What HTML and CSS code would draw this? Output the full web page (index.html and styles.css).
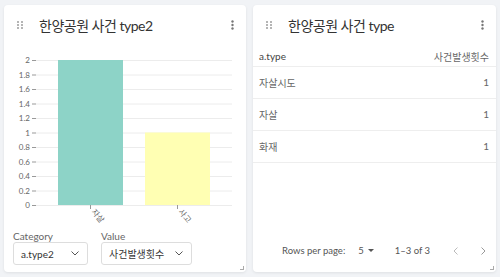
FILE: index.html
```html
<html>
    <head>
        <title>한양공원 사건</title>
        <link rel="stylesheet" href="styles.css">
    </head>
    <body>
        <div class="board">
            <div class="card">
                <div class="card-head">
                    <svg class="handle" width="6" height="8" viewBox="0 0 6 8"><g fill="#b5b5b5"><rect x="0" y="0" width="2" height="2"/><rect x="4" y="0" width="2" height="2"/><rect x="0" y="3" width="2" height="2"/><rect x="4" y="3" width="2" height="2"/><rect x="0" y="6" width="2" height="2"/><rect x="4" y="6" width="2" height="2"/></g></svg>
                    <h2 class="title">한양공원 사건 type2</h2>
                    <svg class="menu" width="3" height="10" viewBox="0 0 3 10"><g fill="#777"><circle cx="1.5" cy="1.5" r="1.2"/><circle cx="1.5" cy="5" r="1.2"/><circle cx="1.5" cy="8.5" r="1.2"/></g></svg>
                </div>
                <svg class="chart" width="242" height="182" viewBox="0 0 242 182">
                    <g stroke="#ececec" stroke-width="1">
                        <line x1="32" y1="15.5" x2="228" y2="15.5"/>
                        <line x1="32" y1="30" x2="228" y2="30"/>
                        <line x1="32" y1="44.5" x2="228" y2="44.5"/>
                        <line x1="32" y1="59" x2="228" y2="59"/>
                        <line x1="32" y1="73.5" x2="228" y2="73.5"/>
                        <line x1="32" y1="88" x2="228" y2="88"/>
                        <line x1="32" y1="102.5" x2="228" y2="102.5"/>
                        <line x1="32" y1="117" x2="228" y2="117"/>
                        <line x1="32" y1="131.5" x2="228" y2="131.5"/>
                        <line x1="32" y1="146" x2="228" y2="146"/>
                        <line x1="32" y1="160.5" x2="228" y2="160.5"/>
                    </g>
                    <g stroke="#999" stroke-width="1">
                        <line x1="28" y1="15.5" x2="32" y2="15.5"/>
                        <line x1="28" y1="30" x2="32" y2="30"/>
                        <line x1="28" y1="44.5" x2="32" y2="44.5"/>
                        <line x1="28" y1="59" x2="32" y2="59"/>
                        <line x1="28" y1="73.5" x2="32" y2="73.5"/>
                        <line x1="28" y1="88" x2="32" y2="88"/>
                        <line x1="28" y1="102.5" x2="32" y2="102.5"/>
                        <line x1="28" y1="117" x2="32" y2="117"/>
                        <line x1="28" y1="131.5" x2="32" y2="131.5"/>
                        <line x1="28" y1="146" x2="32" y2="146"/>
                        <line x1="28" y1="160.5" x2="32" y2="160.5"/>
                        <line x1="86.5" y1="160" x2="86.5" y2="164"/>
                        <line x1="173.5" y1="160" x2="173.5" y2="164"/>
                    </g>
                    <g class="axis-text" text-anchor="end">
                        <text x="26" y="18">2</text>
                        <text x="26" y="32.5">1.8</text>
                        <text x="26" y="47">1.6</text>
                        <text x="26" y="61.5">1.4</text>
                        <text x="26" y="76">1.2</text>
                        <text x="26" y="90.5">1</text>
                        <text x="26" y="105">0.8</text>
                        <text x="26" y="119.5">0.6</text>
                        <text x="26" y="134">0.4</text>
                        <text x="26" y="148.5">0.2</text>
                        <text x="26" y="163">0</text>
                    </g>
                    <rect x="54" y="15" width="65" height="145" fill="#8dd3c7"/>
                    <rect x="141" y="87.5" width="65" height="72.5" fill="#ffffb3"/>
                    <g class="axis-text">
                        <text transform="translate(87 167) rotate(50)">자살</text>
                        <text transform="translate(174 167) rotate(50)">사고</text>
                    </g>
                </svg>
                <div class="fields">
                    <div class="field">
                        <label>Category</label>
                        <div class="select select-cat">a.type2<svg class="chev" width="8" height="5" viewBox="0 0 8 5"><path d="M0.5 0.5 L4 4 L7.5 0.5" fill="none" stroke="#555" stroke-width="1"/></svg></div>
                    </div>
                    <div class="field">
                        <label>Value</label>
                        <div class="select select-val">사건발생횟수<svg class="chev" width="8" height="5" viewBox="0 0 8 5"><path d="M0.5 0.5 L4 4 L7.5 0.5" fill="none" stroke="#555" stroke-width="1"/></svg></div>
                    </div>
                </div>
                <span class="resize"></span>
            </div>

            <div class="card">
                <div class="card-head">
                    <svg class="handle" width="6" height="8" viewBox="0 0 6 8"><g fill="#b5b5b5"><rect x="0" y="0" width="2" height="2"/><rect x="4" y="0" width="2" height="2"/><rect x="0" y="3" width="2" height="2"/><rect x="4" y="3" width="2" height="2"/><rect x="0" y="6" width="2" height="2"/><rect x="4" y="6" width="2" height="2"/></g></svg>
                    <h2 class="title">한양공원 사건 type</h2>
                    <svg class="menu" width="3" height="10" viewBox="0 0 3 10"><g fill="#777"><circle cx="1.5" cy="1.5" r="1.2"/><circle cx="1.5" cy="5" r="1.2"/><circle cx="1.5" cy="8.5" r="1.2"/></g></svg>
                </div>
                <table class="data">
                    <thead>
                        <tr><th>a.type</th><th class="num">사건발생횟수</th></tr>
                    </thead>
                    <tbody>
                        <tr><td>자살시도</td><td class="num">1</td></tr>
                        <tr><td>자살</td><td class="num">1</td></tr>
                        <tr><td>화재</td><td class="num">1</td></tr>
                    </tbody>
                </table>
                <div class="pager">
                    <span class="rows-label">Rows per page:</span>
                    <span class="rows-count">5 <span class="caret"></span></span>
                    <span class="range">1–3 of 3</span>
                    <svg class="nav" width="5" height="8" viewBox="0 0 5 8"><path d="M4.5 0.5 L1 4 L4.5 7.5" fill="none" stroke="#bbb" stroke-width="1"/></svg>
                    <svg class="nav" width="5" height="8" viewBox="0 0 5 8"><path d="M0.5 0.5 L4 4 L0.5 7.5" fill="none" stroke="#999" stroke-width="1"/></svg>
                </div>
                <span class="resize"></span>
            </div>
        </div>
    </body>
</html>
```
FILE: styles.css
```css
body {
    margin: 0;
    background-color: #f1f3f6;
    font-family: "Lato", "Noto Sans CJK KR", sans-serif;
    color: #333;
}

.board {
    display: grid;
    grid-template-columns: 242px 243px;
    gap: 7px;
    padding: 5px 4px;
}

.card {
    position: relative;
    height: 267px;
    background-color: #fff;
    border-radius: 4px;
    box-shadow: 0 1px 3px rgba(0, 0, 0, 0.08);
    display: flex;
    flex-direction: column;
}

.card-head {
    display: flex;
    align-items: center;
    height: 40px;
    padding: 0 12px 0 13px;
}

.handle {
    flex: none;
}

.title {
    flex: 1;
    margin: 0 0 0 16px;
    font-size: 14px;
    letter-spacing: -0.5px;
    font-weight: normal;
    color: #333;
    white-space: nowrap;
}

.menu {
    flex: none;
}

.chart {
    display: block;
}

.axis-text {
    font-size: 8px;
    fill: #666;
}

.fields {
    display: flex;
    gap: 13px;
    padding: 3px 9px 0;
}

.field label {
    display: block;
    font-size: 10px;
    color: #666;
    margin-bottom: 0;
}

.select {
    display: flex;
    align-items: center;
    justify-content: space-between;
    height: 21px;
    padding: 0 8px 0 7px;
    border: 1px solid #ddd;
    border-radius: 3px;
    font-size: 10px;
    color: #333;
}

.select-cat {
    width: 58px;
}

.select-val {
    width: 74px;
}

.chev {
    flex: none;
}

.resize {
    position: absolute;
    right: 2px;
    bottom: 2px;
    width: 3px;
    height: 3px;
    border-right: 1px solid #aaa;
    border-bottom: 1px solid #aaa;
}

.data {
    width: 100%;
    margin-top: 2px;
    border-collapse: collapse;
    font-size: 10px;
}

.data th {
    height: 19px;
    padding: 0 7px 0 6px;
    text-align: left;
    font-weight: normal;
    color: #444;
    border-bottom: 1px solid #eee;
}

.data td {
    height: 32px;
    padding: 0 7px 0 6px;
    color: #666;
    border-bottom: 1px solid #eee;
}

.data th.num {
    text-align: right;
    color: #666;
}

.data td.num {
    text-align: right;
}

.pager {
    margin-top: auto;
    margin-bottom: 16px;
    display: flex;
    align-items: center;
    padding-left: 29px;
    font-size: 9.5px;
    color: #555;
}

.rows-count {
    margin-left: 13px;
    display: flex;
    align-items: center;
    gap: 4px;
}

.caret {
    width: 0;
    height: 0;
    border-left: 3px solid transparent;
    border-right: 3px solid transparent;
    border-top: 3px solid #555;
}

.range {
    margin-left: 21px;
}

.nav {
    margin-left: 23px;
}
```
